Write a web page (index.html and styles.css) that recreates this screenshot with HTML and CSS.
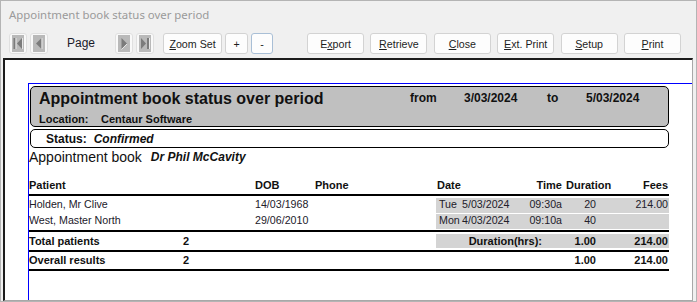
FILE: index.html
```html
<!DOCTYPE html>
<html lang="en">
<head>
    <meta charset="UTF-8">
    <title>Appointment book status over period</title>
    <link rel="stylesheet" href="styles.css">
</head>
<body>
    <div class="window">
        <div class="titlebar">Appointment book status over period</div>

        <div class="toolbar">
            <span class="nav">
                <svg width="12" height="17" viewBox="0 0 12 17">
                    <rect width="12" height="17" fill="#b9b9b9"/>
                    <rect x="1.5" y="3" width="2" height="11" fill="#7b7b7b"/>
                    <rect x="3.5" y="3" width="1" height="11" fill="#e6e6e6"/>
                    <polygon points="5,8.5 10,3 10,14" fill="#7b7b7b"/>
                    <line x1="10.5" y1="3" x2="10.5" y2="14" stroke="#e6e6e6"/>
                </svg>
            </span>
            <span class="nav nav-gap">
                <svg width="12" height="17" viewBox="0 0 12 17">
                    <rect width="12" height="17" fill="#b9b9b9"/>
                    <polygon points="3,8.5 8.5,3 8.5,14" fill="#7b7b7b"/>
                    <line x1="9" y1="3" x2="9" y2="14" stroke="#e6e6e6"/>
                </svg>
            </span>
            <span class="page-label">Page</span>
            <span class="nav">
                <svg width="12" height="17" viewBox="0 0 12 17">
                    <rect width="12" height="17" fill="#b9b9b9"/>
                    <polygon points="9,8.5 3.5,3 3.5,14" fill="#7b7b7b"/>
                    <line x1="3.5" y1="14.5" x2="9" y2="9" stroke="#e6e6e6"/>
                </svg>
            </span>
            <span class="nav nav-gap">
                <svg width="12" height="17" viewBox="0 0 12 17">
                    <rect width="12" height="17" fill="#b9b9b9"/>
                    <polygon points="7,8.5 2,3 2,14" fill="#7b7b7b"/>
                    <rect x="8" y="3" width="2" height="11" fill="#7b7b7b"/>
                    <rect x="10" y="3" width="1" height="11" fill="#e6e6e6"/>
                </svg>
            </span>
            <button class="btn btn-zoom"><u>Z</u>oom Set</button>
            <button class="btn btn-small">+</button>
            <button class="btn btn-small btn-focus">-</button>

            <div class="actions">
                <button class="btn">E<u>x</u>port</button>
                <button class="btn"><u>R</u>etrieve</button>
                <button class="btn"><u>C</u>lose</button>
                <button class="btn"><u>E</u>xt. Print</button>
                <button class="btn"><u>S</u>etup</button>
                <button class="btn"><u>P</u>rint</button>
            </div>
        </div>

        <div class="report">
            <div class="page">
                <div class="head-box">
                    <div class="head-row">
                        <span class="head-title">Appointment book status over period</span>
                        <span class="head-meta">from</span>
                        <span class="head-meta">3/03/2024</span>
                        <span class="head-meta">to</span>
                        <span class="head-meta">5/03/2024</span>
                    </div>
                    <div class="loc-row">
                        <span>Location:</span>
                        <span>Centaur Software</span>
                    </div>
                </div>

                <div class="status-box">
                    <span>Status:</span>
                    <em>Confirmed</em>
                </div>

                <div class="book-line">
                    <span>Appointment book</span>
                    <em>Dr Phil McCavity</em>
                </div>

                <div class="cols col-head">
                    <span>Patient</span>
                    <span>DOB</span>
                    <span>Phone</span>
                    <div class="head-times">
                        <span class="pl1">Date</span>
                        <span class="r">Time</span>
                        <span class="pl4">Duration</span>
                        <span class="r pr1">Fees</span>
                    </div>
                </div>
                <div class="rule"></div>

                <div class="cols data-row first">
                    <span>Holden, Mr Clive</span>
                    <span>14/03/1968</span>
                    <span></span>
                    <div class="shade">
                        <span class="pl3">Tue</span>
                        <span>5/03/2024</span>
                        <span class="r">09:30a</span>
                        <span class="r">20</span>
                        <span class="r pr1">214.00</span>
                    </div>
                </div>
                <div class="cols data-row">
                    <span>West, Master North</span>
                    <span>29/06/2010</span>
                    <span></span>
                    <div class="shade">
                        <span class="pl3">Mon</span>
                        <span>4/03/2024</span>
                        <span class="r">09:10a</span>
                        <span class="r">40</span>
                        <span class="r pr1"></span>
                    </div>
                </div>
                <div class="rule tight"></div>

                <div class="total-row">
                    <span>Total patients</span>
                    <span>2</span>
                    <div class="total-vals total-shade">
                        <span class="r">Duration(hrs):</span>
                        <span class="r">1.00</span>
                        <span class="r pr1">214.00</span>
                    </div>
                </div>
                <div class="rule"></div>

                <div class="total-row overall">
                    <span>Overall results</span>
                    <span>2</span>
                    <div class="total-vals">
                        <span></span>
                        <span class="r">1.00</span>
                        <span class="r pr1">214.00</span>
                    </div>
                </div>
                <div class="rule"></div>
            </div>
        </div>
    </div>
</body>
</html>
```

FILE: styles.css
```css
body {
    margin: 0;
    background-color: #f0f0f0;
    font-family: "Liberation Sans", Arial, sans-serif;
}

.window {
    width: 697px;
    height: 302px;
    box-sizing: border-box;
    border: 1px solid #b4b4b4;
    background-color: #f0f0f0;
    display: flex;
    flex-direction: column;
}

.titlebar {
    height: 32px;
    padding-left: 8px;
    font-family: "Noto Sans", sans-serif;
    font-size: 11.4px;
    line-height: 28px;
    color: #9a9a9a;
}

/* toolbar */

.toolbar {
    display: flex;
    align-items: center;
    height: 21px;
    padding-left: 8px;
    margin-bottom: 4px;
}

.nav {
    width: 18px;
    height: 21px;
    box-sizing: border-box;
    border: 1px solid #e0e0e0;
    border-radius: 3px;
    background-color: #f9f9f9;
    display: flex;
    align-items: center;
    justify-content: center;
}

.nav-gap {
    margin-left: 3px;
}

.page-label {
    margin: 0 20px 0 19px;
    font-size: 12px;
    color: #1a1a2a;
    padding-bottom: 2px;
}

.btn {
    height: 21px;
    box-sizing: border-box;
    margin: 0;
    padding: 0;
    border: 1px solid #d3d3d3;
    border-radius: 3px;
    background-color: #fdfdfd;
    font-family: "Liberation Sans", Arial, sans-serif;
    font-size: 10.67px;
    color: #1e1e1e;
    text-align: center;
}

.btn-zoom {
    width: 59px;
    margin-left: 9px;
}

.btn-small {
    width: 23px;
    margin-left: 3px;
}

.btn-focus {
    width: 22px;
    border-color: #a9bfd6;
}

.actions {
    display: flex;
    gap: 6.4px;
    margin-left: 34px;
}

.actions .btn {
    width: 57px;
}

/* report area */

.report {
    flex: 1;
    margin: 0 3px 0 2px;
    border-left: 2px solid #1c1c1c;
    border-top: 2px solid #1c1c1c;
    border-right: 1px solid #a8a8a8;
    border-bottom: 1px solid #a8a8a8;
    background-color: #fff;
    display: flex;
    flex-direction: column;
}

.page {
    flex: 1;
    margin: 23px 0 0 23px;
    border-left: 1px solid #0000ff;
    border-top: 1px solid #0000ff;
    color: #111;
}

.head-box {
    margin: 2px 0 0 1px;
    width: 639px;
    height: 41px;
    box-sizing: border-box;
    border: 1px solid #000;
    border-radius: 5px;
    background-color: #c0c0c0;
    padding: 3px 0 0 8px;
}

.head-row {
    display: grid;
    grid-template-columns: 371px 54px 83px 39px auto;
    align-items: start;
    font-weight: bold;
}

.head-title {
    font-size: 16px;
    line-height: 18px;
}

.head-meta {
    font-size: 12px;
    line-height: 14px;
    padding-top: 1px;
}

.loc-row {
    display: grid;
    grid-template-columns: 62px auto;
    margin-top: 5px;
    font-size: 11px;
    line-height: 13px;
    font-weight: bold;
}

.status-box {
    margin: 2px 0 0 1px;
    width: 639px;
    height: 19px;
    box-sizing: border-box;
    border: 1px solid #000;
    border-radius: 5px;
    padding: 2px 0 0 15px;
    display: flex;
    gap: 7px;
    font-size: 12px;
    line-height: 14px;
    font-weight: bold;
}

.book-line {
    display: flex;
    gap: 9px;
    margin-top: 1px;
    font-size: 14px;
    line-height: 16px;
}

.book-line em {
    font-size: 12px;
    font-weight: bold;
}

/* table */

.cols {
    display: grid;
    grid-template-columns: 226px 60px 121px 233px;
    width: 640px;
    white-space: nowrap;
}

.col-head {
    margin-top: 14px;
    font-size: 11px;
    line-height: 13px;
    font-weight: bold;
}

.head-times {
    display: grid;
    grid-template-columns: 93px 33px 44px 63px;
}

.rule {
    width: 640px;
    height: 2px;
    margin-top: 2px;
    background-color: #000;
}

.rule.tight {
    margin-top: 1px;
}

.data-row {
    height: 15px;
    margin-top: 1px;
    font-size: 10.67px;
    line-height: 13px;
    color: #22202a;
}

.data-row.first {
    margin-top: 2px;
}

.shade {
    display: grid;
    grid-template-columns: 26px 67px 33px 34px 73px;
    height: 15px;
    background-color: #d4d4d4;
}

.total-row {
    display: grid;
    grid-template-columns: 154px 253px 233px;
    width: 640px;
    height: 14px;
    margin-top: 2px;
    font-size: 11px;
    line-height: 14px;
    font-weight: bold;
    white-space: nowrap;
}

.total-row.overall {
    margin-top: 1px;
}

.total-vals {
    display: grid;
    grid-template-columns: 106px 54px 73px;
}

.total-shade {
    background-color: #d4d4d4;
}

.r {
    text-align: right;
}

.pl1 {
    padding-left: 1px;
}

.pl3 {
    padding-left: 3px;
}

.pl4 {
    padding-left: 4px;
}

.pr1 {
    padding-right: 1px;
}
```
